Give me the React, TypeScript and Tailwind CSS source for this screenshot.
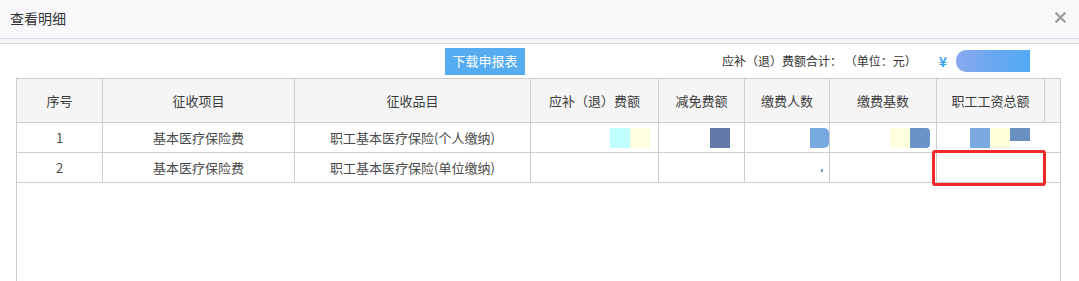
import { ReactNode } from "react";

type Col = { title: string; w: string };

const cols: Col[] = [
  { title: "序号", w: "w-[86px]" },
  { title: "征收项目", w: "w-[192px]" },
  { title: "征收品目", w: "w-[236px]" },
  { title: "应补（退）费额", w: "w-[128px]" },
  { title: "减免费额", w: "w-[86px]" },
  { title: "缴费人数", w: "w-[85px]" },
  { title: "缴费基数", w: "w-[107px]" },
  { title: "职工工资总额", w: "w-[108px]" },
];

const rows = [
  { no: "1", item: "基本医疗保险费", sub: "职工基本医疗保险(个人缴纳)" },
  { no: "2", item: "基本医疗保险费", sub: "职工基本医疗保险(单位缴纳)" },
];

// blurred (redacted) amounts in the first row
function Blot({ colors, className }: { colors: string[]; className?: string }) {
  return (
    <div className={`flex h-[20px] blur-[0.4px] overflow-hidden ${className ?? ""}`}>
      {colors.map((c, i) => (
        <div key={i} className={`w-[20px] h-full ${c}`} />
      ))}
    </div>
  );
}

function Cell({
  w,
  children,
  last,
  className,
}: {
  w: string;
  children?: ReactNode;
  last?: boolean;
  className?: string;
}) {
  return (
    <div
      className={`${w} shrink-0 h-full flex items-center ${last ? "" : "border-r border-[#cccccc]"} ${className ?? "justify-center"}`}
    >
      {children}
    </div>
  );
}

export default function App() {
  return (
    <div
      className="w-[1079px] h-[281px] overflow-hidden bg-white text-[#333]"
      style={{ fontFamily: '"Noto Sans CJK SC", "Liberation Sans", sans-serif' }}
    >
      {/* title bar */}
      <div className="h-[39px] bg-[#f8f8fa] border-b border-[#dcdce2] flex items-center justify-between pl-[10px] pr-[13px]">
        <span className="text-[14px] text-[#333] -mt-[2px]">查看明细</span>
        <svg width="11" height="11" viewBox="0 0 11 11" className="-mt-[3px]">
          <path d="M1.5 1.5 L9.5 9.5 M9.5 1.5 L1.5 9.5" stroke="#a0a0a0" strokeWidth="2.4" strokeLinecap="square" />
        </svg>
      </div>
      <div className="h-[5px] bg-[#f4f4f6] border-b border-[#d6d6d6]" />

      <div className="pl-[16px] pr-[18px]">
        {/* toolbar */}
        <div className="h-[34px] flex items-center">
          <button className="ml-[429px] w-[80px] h-[27px] bg-[#55acf0] text-white text-[13px] flex items-center justify-center">
            下载申报表
          </button>
          <div className="ml-auto flex items-center text-[12px] text-[#333] mr-[31px]">
            <span className="whitespace-pre">应补（退）费额合计： （单位：元）</span>
            <span className="ml-[22px] text-[#3a9ff0] font-bold text-[14px]">¥</span>
            <div className="ml-[9px] w-[74px] h-[22px] rounded-l-[10px] bg-gradient-to-r from-[#8caaf0] via-[#68a8f0] to-[#52aaf5] blur-[0.5px]" />
          </div>
        </div>

        {/* table box */}
        <div className="h-[203px] border border-[#cccccc] border-b-0">
          <div className="h-[44px] bg-[#f5f5f5] border-b border-[#cccccc] flex text-[13px] text-[#3a3a3a]">
            {cols.map((c) => (
              <Cell key={c.title} w={c.w}>
                {c.title}
              </Cell>
            ))}
            <div className="flex-1" />
          </div>

          {rows.map((r, i) => (
            <div key={r.no} className="h-[30px] border-b border-[#cccccc] flex text-[13px] text-[#4a4a4a]">
              <Cell w={cols[0].w}>{r.no}</Cell>
              <Cell w={cols[1].w}>{r.item}</Cell>
              <Cell w={cols[2].w}>{r.sub}</Cell>
              <Cell w={cols[3].w} className="justify-end">
                {i === 0 && <Blot colors={["bg-[#c0ffff]", "bg-[#ffffe0]"]} className="mr-[8px]" />}
              </Cell>
              <Cell w={cols[4].w} className="justify-end">
                {i === 0 && <Blot colors={["bg-[#6478a8]"]} className="mr-[14px]" />}
              </Cell>
              <Cell w={cols[5].w} className="justify-end">
                {i === 0 ? (
                  <div className="h-[20px] w-[19px] bg-[#78a8e0] rounded-r-[5px] blur-[0.4px]" />
                ) : (
                  <span className="mr-[6px] mt-[6px] w-[2px] h-[3px] bg-[#6a9ad0]" />
                )}
              </Cell>
              <Cell w={cols[6].w} className="justify-end">
                {i === 0 && (
                  <Blot colors={["bg-[#ffffe0]", "bg-[#6a94c8]"]} className="mr-[6px] rounded-r-[4px]" />
                )}
              </Cell>
              <Cell w="w-[124px]" last className="justify-start relative">
                {i === 0 ? (
                  <div className="ml-[33px] flex h-[20px] blur-[0.4px]">
                    <div className="w-[20px] h-full bg-[#7aaae0]" />
                    <div className="w-[20px] h-full bg-[#ffffd8]" />
                    <div className="w-[20px] h-[13px] bg-[#6a90c0]" />
                  </div>
                ) : (
                  <div className="absolute left-[-5px] top-[-3px] w-[114px] h-[36px] border-[3px] border-[#f02828] rounded-[3px]" />
                )}
              </Cell>
            </div>
          ))}
        </div>
      </div>
    </div>
  );
}
